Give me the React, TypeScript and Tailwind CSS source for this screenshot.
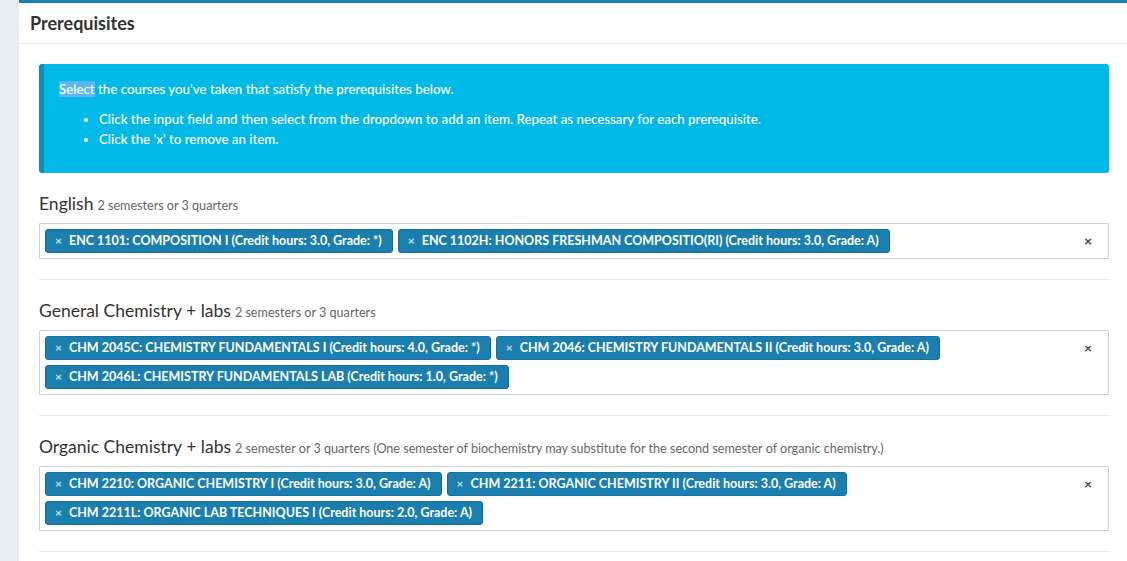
import React from "react";

type Section = {
  title: string;
  note: string;
  tags: string[];
};

const sections: Section[] = [
  {
    title: "English",
    note: "2 semesters or 3 quarters",
    tags: [
      "ENC 1101: COMPOSITION I (Credit hours: 3.0, Grade: *)",
      "ENC 1102H: HONORS FRESHMAN COMPOSITIO(RI) (Credit hours: 3.0, Grade: A)",
    ],
  },
  {
    title: "General Chemistry + labs",
    note: "2 semesters or 3 quarters",
    tags: [
      "CHM 2045C: CHEMISTRY FUNDAMENTALS I (Credit hours: 4.0, Grade: *)",
      "CHM 2046: CHEMISTRY FUNDAMENTALS II (Credit hours: 3.0, Grade: A)",
      "CHM 2046L: CHEMISTRY FUNDAMENTALS LAB (Credit hours: 1.0, Grade: *)",
    ],
  },
  {
    title: "Organic Chemistry + labs",
    note: "2 semester or 3 quarters (One semester of biochemistry may substitute for the second semester of organic chemistry.)",
    tags: [
      "CHM 2210: ORGANIC CHEMISTRY I (Credit hours: 3.0, Grade: A)",
      "CHM 2211: ORGANIC CHEMISTRY II (Credit hours: 3.0, Grade: A)",
      "CHM 2211L: ORGANIC LAB TECHNIQUES I (Credit hours: 2.0, Grade: A)",
    ],
  },
];

function Tag({ label }: { label: string }) {
  return (
    <span className="flex h-[24px] items-center rounded-[3px] border border-[#17709b] bg-[#1a7fae] pl-[9px] pr-[10px] text-[12.5px] font-bold text-white">
      <span className="mr-[7px] text-[12px] font-bold leading-none text-[#c9e0ec]">×</span>
      <span className="leading-none">{label}</span>
    </span>
  );
}

function PrereqSection({ section }: { section: Section }) {
  return (
    <div>
      <div className="mb-[7px] flex h-[24px] items-baseline leading-[24px]">
        <span className="text-[17.5px] text-[#333]">{section.title}</span>
        <span className="ml-[4px] text-[12.6px] text-[#666]">{section.note}</span>
      </div>
      <div className="flex items-start rounded-[1px] border border-[#cdd1d6] bg-white">
        <div className="flex flex-1 flex-wrap gap-[5px] p-[5px]">
          {section.tags.map((t) => (
            <Tag key={t} label={t} />
          ))}
        </div>
        <span className="mr-[16px] mt-[10px] text-[14px] font-bold leading-none text-[#444]">×</span>
      </div>
      <div className="mb-[19px] mt-[20px] h-px bg-[#e6e8eb]" />
    </div>
  );
}

export default function App() {
  return (
    <div
      className="flex h-[561px] w-[1127px] overflow-hidden bg-[#e8edf4]"
      style={{ fontFamily: "Lato, 'Open Sans', sans-serif" }}
    >
      <div className="ml-[19px] flex-1 border-t-[3px] border-[#1682b0] bg-white">
        <div className="flex h-[41px] items-center border-b border-[#eceef0] px-[11px]">
          <h1 className="text-[18px] font-bold text-[#333]">Prerequisites</h1>
        </div>
        <div className="pl-[20px] pr-[18px] pt-[20px]">
          <div className="rounded-[3px] border-l-[5px] border-[#0a8fb7] bg-[#00b9e6] pb-[24px] pl-[15px] pr-[20px] pt-[15px] text-[13.3px] font-medium leading-[20px] text-white">
            <p>
              <span className="bg-[#5ab6f0]">Select</span> the courses you've taken that satisfy the prerequisites below.
            </p>
            <ul className="mt-[10px] list-disc pl-[40px]">
              <li>Click the input field and then select from the dropdown to add an item. Repeat as necessary for each prerequisite.</li>
              <li>Click the 'x' to remove an item.</li>
            </ul>
          </div>
          <div className="mt-[19px]">
            {sections.map((s) => (
              <PrereqSection key={s.title} section={s} />
            ))}
          </div>
        </div>
      </div>
    </div>
  );
}
